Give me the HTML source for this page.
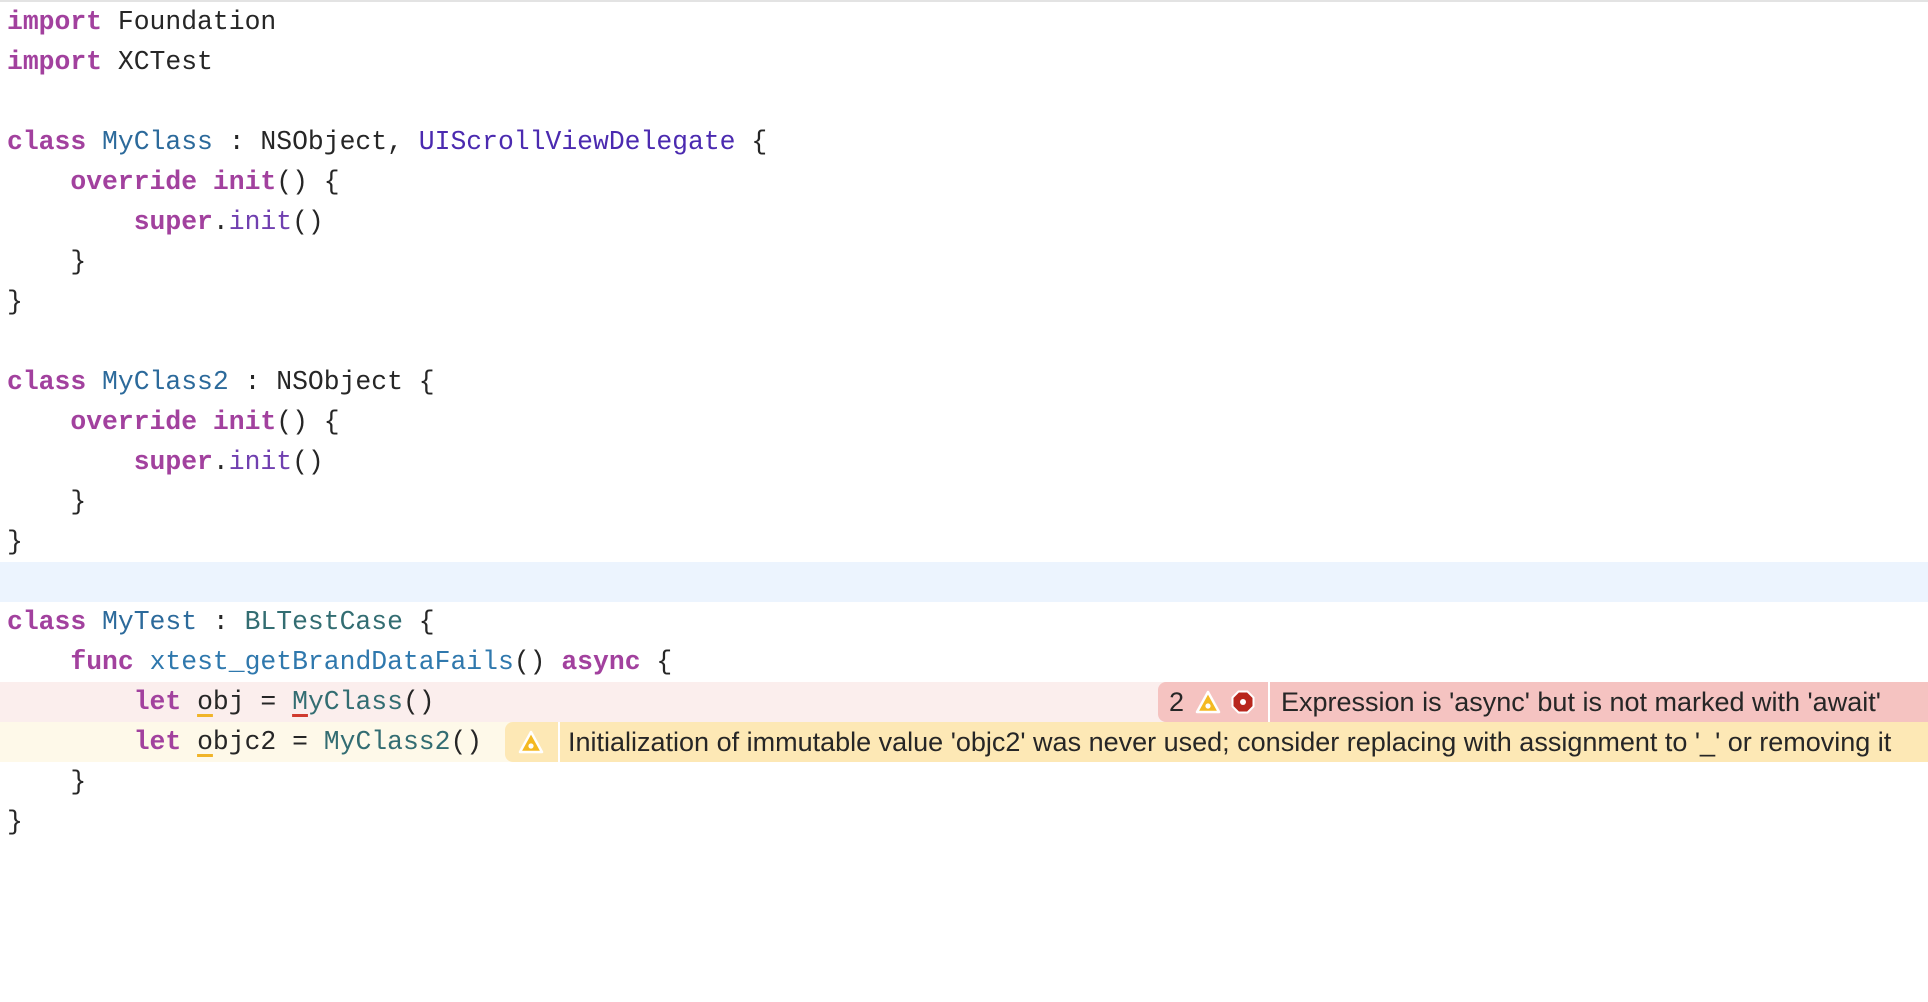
<!DOCTYPE html>
<html><head><meta charset="utf-8"><style>
html,body{margin:0;padding:0;background:#fff;}
body{width:1928px;height:854px;position:relative;overflow:hidden;}
.top{position:absolute;left:0;top:0;width:1928px;height:2px;background:#e3e3e3;}
.ln{position:absolute;left:0;width:1928px;height:40px;line-height:40px;font-family:"Liberation Mono",monospace;font-size:26.4px;color:#262626;white-space:pre;}
.ln span.t{position:absolute;left:7px;top:0;}
.k{color:#a2419e;font-weight:bold;}
.d{color:#2c6a9b;}
.s{color:#4b2ab0;}
.f{color:#7040b0;}
.u{color:#336d72;}
.fn{color:#2f78ad;}
.uo{text-decoration:underline;text-decoration-color:#f0b429;text-decoration-thickness:3px;text-underline-offset:5px;}
.ur{text-decoration:underline;text-decoration-color:#d03a2e;text-decoration-thickness:3px;text-underline-offset:5px;}
.msg{position:absolute;font-family:"Liberation Sans",sans-serif;font-size:27px;color:#262626;line-height:40px;height:40px;top:0;}
</style></head><body>
<div class="top"></div>
<div class="ln" style="top:2px"><span class="t"><span class="k">import</span> Foundation</span></div>
<div class="ln" style="top:42px"><span class="t"><span class="k">import</span> XCTest</span></div>
<div class="ln" style="top:122px"><span class="t"><span class="k">class</span> <span class="d">MyClass</span> : NSObject, <span class="s">UIScrollViewDelegate</span> {</span></div>
<div class="ln" style="top:162px"><span class="t">    <span class="k">override</span> <span class="k">init</span>() {</span></div>
<div class="ln" style="top:202px"><span class="t">        <span class="k">super</span>.<span class="f">init</span>()</span></div>
<div class="ln" style="top:242px"><span class="t">    }</span></div>
<div class="ln" style="top:282px"><span class="t">}</span></div>
<div class="ln" style="top:362px"><span class="t"><span class="k">class</span> <span class="d">MyClass2</span> : NSObject {</span></div>
<div class="ln" style="top:402px"><span class="t">    <span class="k">override</span> <span class="k">init</span>() {</span></div>
<div class="ln" style="top:442px"><span class="t">        <span class="k">super</span>.<span class="f">init</span>()</span></div>
<div class="ln" style="top:482px"><span class="t">    }</span></div>
<div class="ln" style="top:522px"><span class="t">}</span></div>
<div class="ln" style="top:562px;background:#ecf4fe"></div>
<div class="ln" style="top:602px"><span class="t"><span class="k">class</span> <span class="d">MyTest</span> : <span class="u">BLTestCase</span> {</span></div>
<div class="ln" style="top:642px"><span class="t">    <span class="k">func</span> <span class="fn">xtest_getBrandDataFails</span>() <span class="k">async</span> {</span></div>
<div class="ln" style="top:682px;background:#fbeeed"><span class="t">        <span class="k">let</span> <span class="uo">o</span>bj = <span class="u"><span class="ur">M</span>yClass</span>()</span>
 <div style="position:absolute;left:1158px;top:0;width:110px;height:40px;background:#f5c3c1;border-radius:8px 0 0 8px;"></div>
 <div style="position:absolute;left:1268px;top:0;width:2px;height:40px;background:#fff;"></div>
 <div style="position:absolute;left:1270px;top:0;width:658px;height:40px;background:#f5c3c1;"></div>
 <span class="msg" style="left:1169px">2</span>
 <svg style="position:absolute;left:1195px;top:8px" width="26" height="25" viewBox="0 0 26 25"><path d="M13 2 L24 22 L2 22 Z" fill="#f4b921" stroke="#fff" stroke-width="2.5" stroke-linejoin="round"/><circle cx="13" cy="16" r="2.6" fill="#fff"/></svg>
 <svg style="position:absolute;left:1231px;top:8px" width="24" height="24" viewBox="0 0 24 24"><path d="M7.5 1.5 H16.5 L22.5 7.5 V16.5 L16.5 22.5 H7.5 L1.5 16.5 V7.5 Z" fill="#b8261d" stroke="#fff" stroke-width="2"/><circle cx="12" cy="12" r="3" fill="#fff"/></svg>
 <span class="msg" style="left:1281px">Expression is 'async' but is not marked with 'await'</span>
</div>
<div class="ln" style="top:722px;background:#fef9e9"><span class="t">        <span class="k">let</span> <span class="uo">o</span>bjc2 = <span class="u">MyClass2</span>()</span>
 <div style="position:absolute;left:505px;top:0;width:53px;height:40px;background:#fde8b5;border-radius:8px 0 0 8px;"></div>
 <div style="position:absolute;left:558px;top:0;width:2px;height:40px;background:#fff;"></div>
 <div style="position:absolute;left:560px;top:0;width:1368px;height:40px;background:#fde8b5;"></div>
 <svg style="position:absolute;left:518px;top:8px" width="26" height="25" viewBox="0 0 26 25"><path d="M13 2 L24 22 L2 22 Z" fill="#f4b921" stroke="#fff" stroke-width="2.5" stroke-linejoin="round"/><circle cx="13" cy="16" r="2.6" fill="#fff"/></svg>
 <span class="msg" style="left:568px">Initialization of immutable value 'objc2' was never used; consider replacing with assignment to '_' or removing it</span>
</div>
<div class="ln" style="top:762px"><span class="t">    }</span></div>
<div class="ln" style="top:802px"><span class="t">}</span></div>
</body></html>
